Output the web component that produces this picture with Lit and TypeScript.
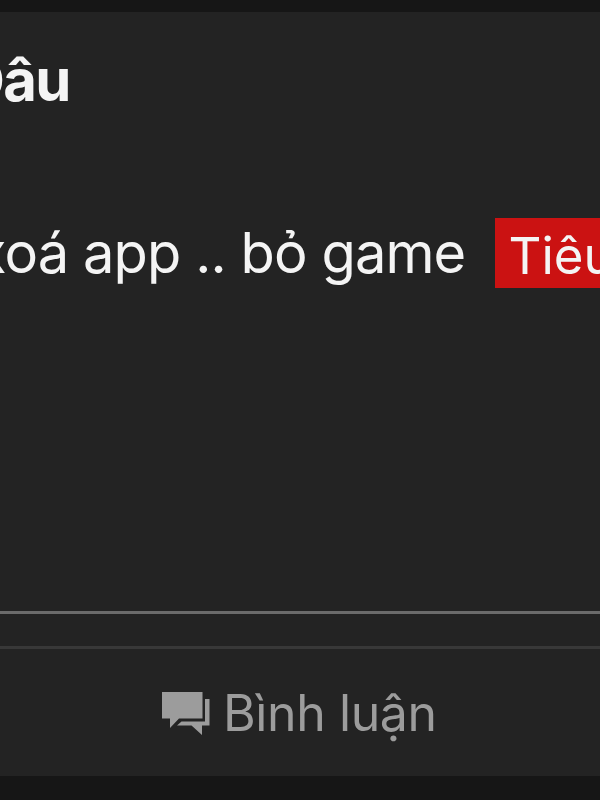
import { LitElement, html, css } from "lit";
import { customElement } from "lit/decorators.js";

@customElement("app-root")
export class AppRoot extends LitElement {
  static styles = css`
    :host { display: flex; flex-direction: column; width: 600px; height: 800px; overflow: hidden; background: #161616; font-family: Inter, sans-serif; box-sizing: border-box; padding: 12px 0 24px; color: #f4f4f4; }
    .card { flex: 1; background: #232323; display: flex; flex-direction: column; overflow: hidden; }
    .name { margin: 38px 0 0 -37px; height: 60px; line-height: 60px; font-size: 58px; font-weight: 700; letter-spacing: -1.6px; white-space: pre; }
    .line { display: flex; align-items: center; margin-top: 108px; height: 70px; white-space: pre; }
    .msg { width: 494px; flex: none; display: flex; }
    .msg span { margin-left: -24px; font-size: 56px; line-height: 72px; letter-spacing: -0.9px; }
    .tag { flex: none; background: #cb1212; height: 70px; line-height: 75px; padding-left: 14px; font-size: 51px; width: 200px; box-sizing: border-box; margin-left: 0.5px; }
    .rule { margin-top: 323px; height: 3px; flex: none; background: #6b6b6b; }
    .gap { height: 32px; flex: none; }
    .rule2 { height: 3px; flex: none; background: #383838; }
    .action { flex: 1; display: flex; align-items: center; padding-left: 162px; color: #9c9c9c; font-size: 50px; letter-spacing: -0.4px; }
    svg { width: 48px; height: 44px; margin-right: 13px; flex: none; }
  `;
  render() {
    return html`<article class="card">
      <div class="name">Dâu</div>
      <div class="line"><div class="msg"><span>xoá app .. bỏ game</span></div><div class="tag">Tiêu</div></div>
      <div class="rule"></div><div class="gap"></div><div class="rule2"></div>
      <div class="action"><svg viewBox="0 0 48 44" fill="currentColor"><path d="M0 1H40.5V27.5H17L8 37V27.5H0Z"/><path d="M43 8H47.5V34.5H40V44L29.5 34.5H15L19.5 30.5H43Z"/></svg><span>Bình luận</span></div>
    </article>`;
  }
}
